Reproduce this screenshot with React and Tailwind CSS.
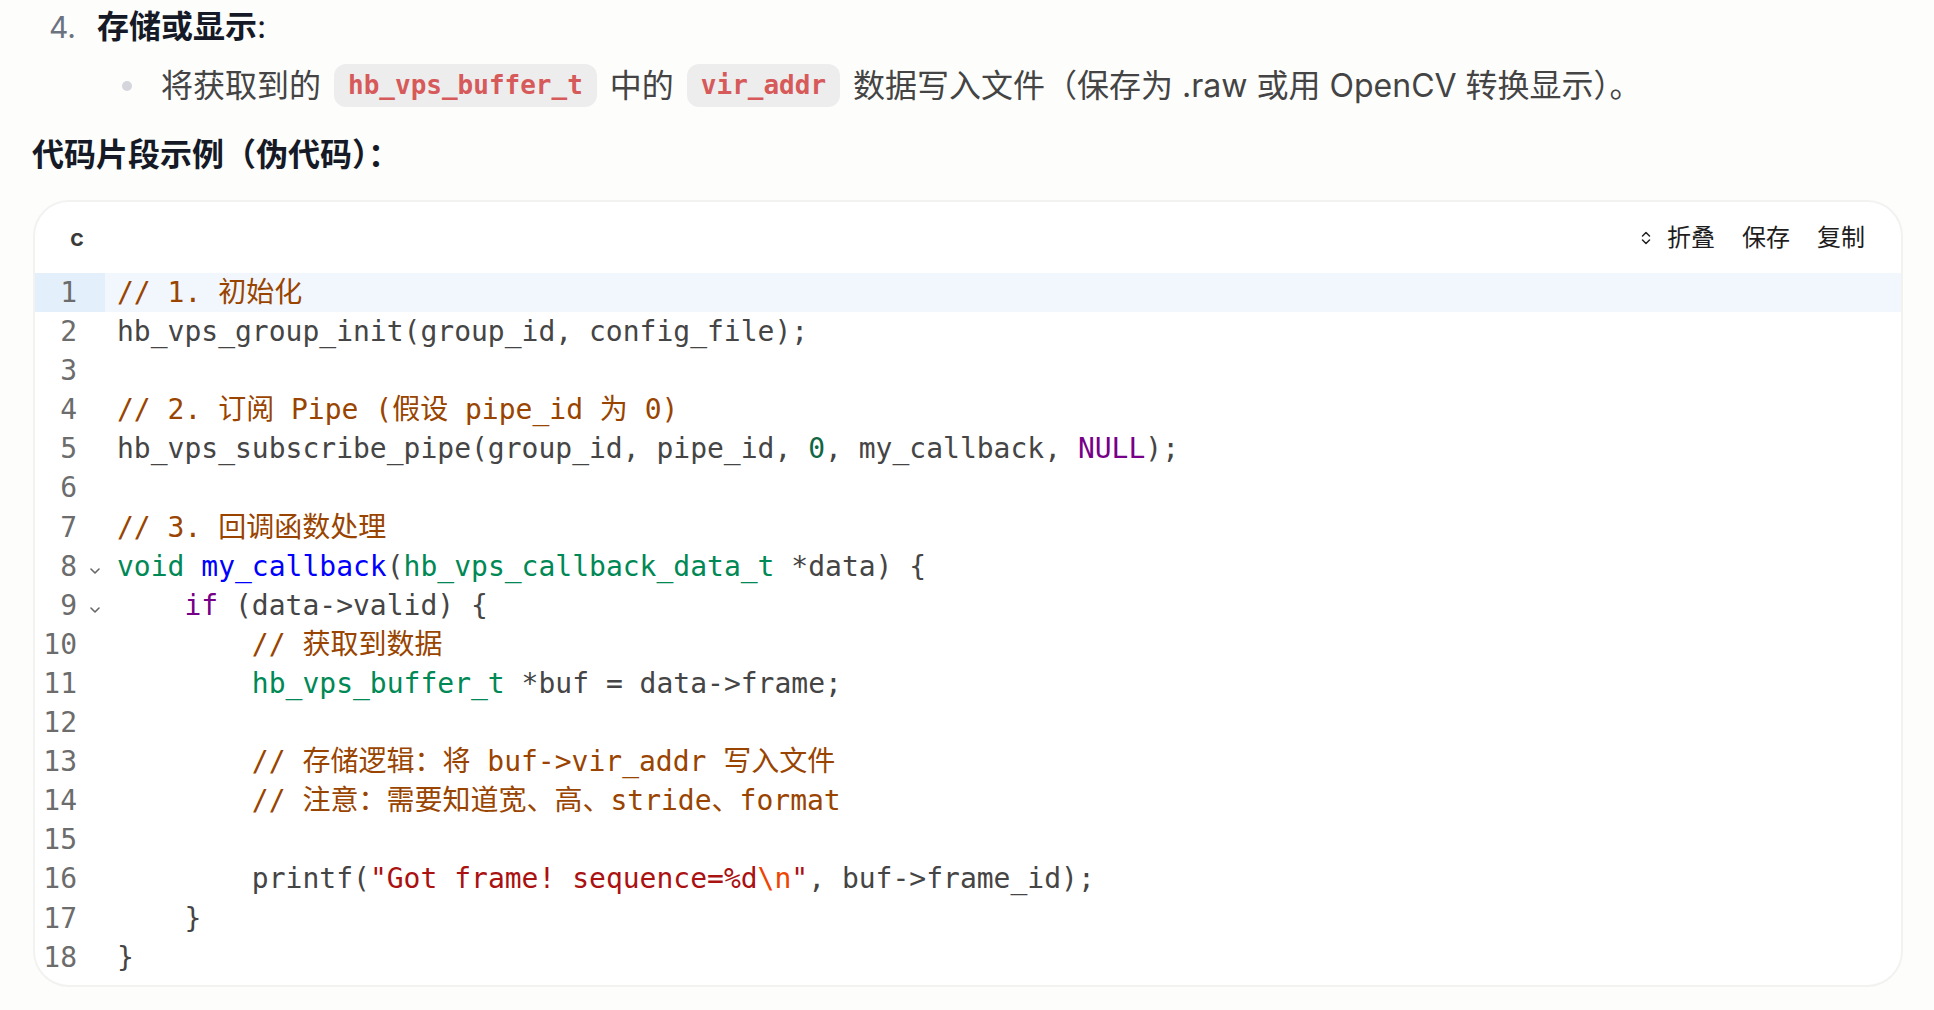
import React from 'react';

const sans = { fontFamily: 'Inter, "Noto Sans CJK SC", sans-serif' };

// token kinds -> CodeMirror-ish colours
const tone = {
  p: 'text-[#454545]',
  c: 'text-[#940]',
  t: 'text-[#085]',
  d: 'text-[#00f]',
  k: 'text-[#708]',
  n: 'text-[#164]',
  s: 'text-[#a11]',
  e: 'text-[#e40]',
};

const lines = [
  [['// 1. 初始化', 'c']],
  [['hb_vps_group_init(group_id, config_file);', 'p']],
  [],
  [['// 2. 订阅 Pipe (假设 pipe_id 为 0)', 'c']],
  [['hb_vps_subscribe_pipe(group_id, pipe_id, ', 'p'], ['0', 'n'], [', my_callback, ', 'p'], ['NULL', 'k'], [');', 'p']],
  [],
  [['// 3. 回调函数处理', 'c']],
  [['void', 't'], [' ', 'p'], ['my_callback', 'd'], ['(', 'p'], ['hb_vps_callback_data_t', 't'], [' *data) {', 'p']],
  [['    ', 'p'], ['if', 'k'], [' (data->valid) {', 'p']],
  [['        // 获取到数据', 'c']],
  [['        ', 'p'], ['hb_vps_buffer_t', 't'], [' *buf = data->frame;', 'p']],
  [],
  [['        // 存储逻辑：将 buf->vir_addr 写入文件', 'c']],
  [['        // 注意：需要知道宽、高、stride、format', 'c']],
  [],
  [['        printf(', 'p'], ['"Got frame! sequence=%d', 's'], ['\\n', 'e'], ['"', 's'], [', buf->frame_id);', 'p']],
  [['    }', 'p']],
  [['}', 'p']],
];

const foldable = [8, 9];

const InlineCode = ({ children }) => (
  <span
    className="inline-block h-[43px] leading-[43px] px-[14px] mx-[13px] rounded-[12px] bg-[#ededed] text-[#d75a5a] font-bold text-[26px]"
    style={{ fontFamily: '"DejaVu Sans Mono", monospace' }}
  >
    {children}
  </span>
);

const FoldMark = () => (
  <svg width="12" height="8" viewBox="0 0 12 8" className="mt-[20px]">
    <path d="M2 2 L6 6 L10 2" fill="none" stroke="#666" strokeWidth="1.6" strokeLinecap="round" strokeLinejoin="round" />
  </svg>
);

export default function App() {
  return (
    <div className="min-h-[1010px] w-[1934px] bg-[#fdfdfc]" style={sans}>
      <div className="h-[54px] flex items-center pl-[49px]">
        <span className="w-[48px] text-[30px] text-[#6b7280]">4.</span>
        <span className="text-[32px] font-bold text-[#151a26]">存储或显示</span>
        <span className="text-[32px] text-[#151a26]">:</span>
      </div>

      <div className="h-[63px] flex items-center pl-[122px] text-[32px] text-[#444]">
        <span className="w-[10px] h-[10px] rounded-full bg-[#d4d6dc] mr-[29px]"></span>
        <span>将获取到的</span>
        <InlineCode>hb_vps_buffer_t</InlineCode>
        <span>中的</span>
        <InlineCode>vir_addr</InlineCode>
        <span>数据写入文件（保存为 .raw 或用 OpenCV 转换显示）。</span>
      </div>

      <div className="h-[76px] flex items-center pl-[32px] text-[32px] font-bold text-[#151a26]">
        代码片段示例（伪代码）：
      </div>

      <div className="mt-[7px] ml-[33px] w-[1870px] bg-white border-2 border-[#f2f2f1] rounded-[36px] pb-[8px] overflow-hidden">
        <div className="h-[71px] flex items-center justify-between pl-[35px] pr-[36px]">
          <span className="text-[24px] font-semibold text-[#3a3a3a]">c</span>
          <div className="flex items-center text-[24px] text-[#1d1d1d]">
            <svg width="12" height="18" viewBox="0 0 12 18" className="mr-[15px]">
              <path d="M2.5 7 L6 3.5 L9.5 7 M2.5 11 L6 14.5 L9.5 11" fill="none" stroke="#222" strokeWidth="1.5" strokeLinecap="round" strokeLinejoin="round" />
            </svg>
            <span>折叠</span>
            <span className="ml-[27px]">保存</span>
            <span className="ml-[27px]">复制</span>
          </div>
        </div>

        <div className="text-[28px] leading-[39.1px]" style={{ fontFamily: '"DejaVu Sans Mono", "Noto Sans CJK SC", monospace' }}>
          {lines.map((tokens, i) => {
            const n = i + 1;
            const active = n === 1;
            return (
              <div key={n} className="flex h-[39.1px]">
                <div className={`flex w-[70px] shrink-0 ${active ? 'bg-[#e3effb]' : ''}`}>
                  <span className="w-[50px] text-right pr-[8px] text-[#6c6c6c]">{n}</span>
                  <span className="w-[20px] flex justify-center items-start">{foldable.includes(n) && <FoldMark />}</span>
                </div>
                <div className={`flex-1 pl-[12px] whitespace-pre ${active ? 'bg-[#f1f7fd]' : ''}`}>
                  {tokens.map(([text, kind], j) => (
                    <span key={j} className={tone[kind]}>{text}</span>
                  ))}
                </div>
              </div>
            );
          })}
        </div>
      </div>
    </div>
  );
}
